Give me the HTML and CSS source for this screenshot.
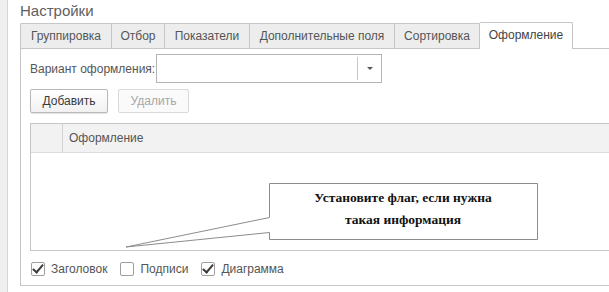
FILE: index.html
```html
<!DOCTYPE html>
<html lang="ru">
<head>
    <meta charset="UTF-8">
    <title>Настройки</title>
    <link rel="stylesheet" href="styles.css">
</head>
<body>
    <div class="screen">
        <div class="side-strip"></div>
        <div class="main">
            <div class="title">Настройки</div>

            <div class="tabs">
                <div class="tab tab-group">Группировка</div>
                <div class="tab tab-filter">Отбор</div>
                <div class="tab tab-fields">Показатели</div>
                <div class="tab tab-extra">Дополнительные поля</div>
                <div class="tab tab-sort">Сортировка</div>
                <div class="tab tab-design active">Оформление</div>
                <div class="tabs-rest"></div>
            </div>

            <div class="panel">
                <div class="field-row">
                    <label class="field-label">Вариант оформления:</label>
                    <div class="combo">
                        <div class="combo-value"></div>
                        <div class="combo-btn"><span class="combo-arrow"></span></div>
                    </div>
                </div>

                <div class="buttons">
                    <button class="btn">Добавить</button>
                    <button class="btn disabled">Удалить</button>
                </div>

                <div class="grid">
                    <div class="grid-head">
                        <div class="grid-mark"></div>
                        <div class="grid-col">Оформление</div>
                    </div>
                    <div class="grid-body"></div>
                </div>

                <div class="checks">
                    <label class="check"><span class="box checked"></span>Заголовок</label>
                    <label class="check"><span class="box"></span>Подписи</label>
                    <label class="check"><span class="box checked"></span>Диаграмма</label>
                </div>
            </div>
        </div>

        <!-- callout over the form -->
        <div class="callout">
            <svg class="callout-shape" width="425" height="72" viewBox="0 0 425 72">
                <path d="M149.5 3.5 H417.5 V59.5 H149.5 V52.5 L6 67 L149.5 37.5 Z" fill="#ffffff" stroke="#8c8c8c" stroke-width="1"/>
            </svg>
            <div class="callout-text">Установите флаг, если нужна<br>такая информация</div>
        </div>
    </div>
</body>
</html>
```

FILE: styles.css
```css
html, body {
    margin: 0;
    padding: 0;
    background: #ffffff;
    overflow: hidden;
}
.screen {
    position: relative;
    display: flex;
    width: 609px;
    height: 292px;
    font-family: "Liberation Sans", Arial, sans-serif;
    font-size: 12px;
    color: #555555;
}
.side-strip {
    width: 7px;
    flex: none;
    background: #efefef;
    border-right: 1px solid #d6d6d6;
}
.main {
    flex: 1;
    padding: 2px 0 0 12px;
    min-width: 0;
}
.title {
    font-size: 15px;
    color: #606060;
    height: 20px;
    line-height: 18px;
}
.tabs {
    display: flex;
    align-items: flex-end;
    height: 27px;
}
.tab {
    box-sizing: border-box;
    height: 26px;
    line-height: 24px;
    text-align: center;
    background: #ededed;
    border: 1px solid #c6c6c6;
    border-right: none;
}
.tab.active {
    height: 27px;
    background: #ffffff;
    border-right: 1px solid #c6c6c6;
    border-bottom: none;
    border-radius: 2px 2px 0 0;
    color: #444444;
}
.tab-group { width: 91px; border-radius: 2px 0 0 0; }
.tab-filter { width: 53px; }
.tab-fields { width: 85px; }
.tab-extra { width: 145px; }
.tab-sort { width: 85px; }
.tab-design { width: 94px; }
.tabs-rest {
    flex: 1;
    border-bottom: 1px solid #c6c6c6;
}
.panel {
    box-sizing: border-box;
    border-left: 1px solid #c6c6c6;
    border-bottom: 1px solid #c6c6c6;
    padding: 5px 0 8px 9px;
}
.field-row {
    display: flex;
    align-items: center;
    height: 29px;
}
.field-label {
    width: 126px;
}
.combo {
    box-sizing: border-box;
    display: flex;
    width: 226px;
    height: 29px;
    border: 1px solid #b4b4b4;
    background: #ffffff;
}
.combo-value {
    flex: 1;
}
.combo-btn {
    width: 23px;
    margin: 2px 0;
    border-left: 1px solid #c8c8c8;
    display: flex;
    align-items: center;
    justify-content: center;
}
.combo-arrow {
    width: 0;
    height: 0;
    border-left: 3px solid transparent;
    border-right: 3px solid transparent;
    border-top: 3px solid #555555;
}
.buttons {
    display: flex;
    gap: 10px;
    margin-top: 6px;
}
.btn {
    box-sizing: border-box;
    height: 24px;
    padding: 0 11px;
    font-family: "Liberation Sans", Arial, sans-serif;
    font-size: 12px;
    color: #3a3a3a;
    background: linear-gradient(#ffffff, #f1f1f1);
    border: 1px solid #b9b9b9;
    border-radius: 2px;
    box-shadow: 0 1px 1px rgba(0, 0, 0, 0.12);
}
.btn:first-child { width: 78px; }
.btn.disabled {
    width: 71px;
    color: #a6a6a6;
    border-color: #d9d9d9;
    box-shadow: none;
    background: #fafafa;
}
.grid {
    box-sizing: border-box;
    margin-top: 10px;
    height: 128px;
    border: 1px solid #c6c6c6;
    border-right: none;
}
.grid-head {
    display: flex;
    height: 28px;
    background: #f2f2f2;
    border-bottom: 1px solid #dcdcdc;
}
.grid-mark {
    width: 31px;
    border-right: 1px solid #d4d4d4;
}
.grid-col {
    padding-left: 6px;
    line-height: 28px;
}
.checks {
    display: flex;
    align-items: center;
    margin-top: 10px;
    height: 16px;
}
.check {
    display: flex;
    align-items: center;
    margin-right: 12px;
}
.box {
    position: relative;
    box-sizing: border-box;
    width: 14px;
    height: 14px;
    border: 1px solid #9f9f9f;
    border-radius: 2px;
    background: #ffffff;
    margin: 0 6px 0 1px;
}
.box.checked::after {
    content: "";
    position: absolute;
    left: 3px;
    top: -1px;
    width: 4px;
    height: 9px;
    border-right: 2px solid #3c3c3c;
    border-bottom: 2px solid #3c3c3c;
    transform: rotate(40deg);
}
.callout {
    position: absolute;
    left: 120px;
    top: 180px;
    width: 425px;
    height: 72px;
}
.callout-shape {
    display: block;
}
.callout-text {
    position: absolute;
    left: 149px;
    top: 1px;
    width: 268px;
    height: 55px;
    display: flex;
    align-items: center;
    justify-content: center;
    text-align: center;
    font-family: "Liberation Serif", "Times New Roman", serif;
    font-weight: bold;
    font-size: 13.5px;
    line-height: 22px;
    color: #111111;
}
```
